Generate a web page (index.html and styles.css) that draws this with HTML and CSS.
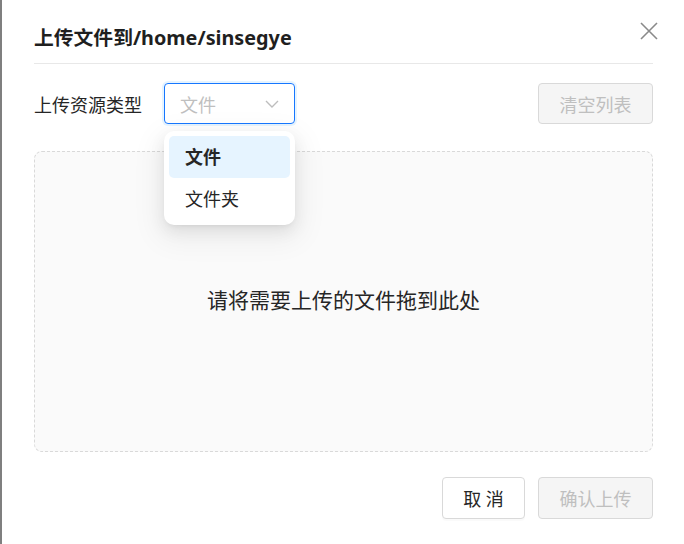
FILE: index.html
```html
<!DOCTYPE html>
<html lang="zh-CN">
<head>
<meta charset="utf-8">
<link rel="stylesheet" href="styles.css">
</head>
<body>
<div class="backdrop"></div>
<div class="dialog">
  <header class="dialog-header">
    <h1 class="dialog-title">上传文件到/home/sinsegye</h1>
    <button class="close-btn" aria-label="关闭">
      <svg width="18" height="18" viewBox="0 0 18 18"><path d="M1 1 L17 17 M17 1 L1 17" stroke="#8a8a8a" stroke-width="1.6" fill="none"/></svg>
    </button>
  </header>
  <div class="toolbar">
    <label class="field-label">上传资源类型</label>
    <div class="select-wrap">
      <div class="select">
        <span class="select-placeholder">文件</span>
        <svg class="chevron" width="14" height="8" viewBox="0 0 14 8"><path d="M1 1 L7 7 L13 1" stroke="#bdbdbd" stroke-width="1.4" fill="none"/></svg>
      </div>
      <ul class="dropdown">
        <li class="option option-active">文件</li>
        <li class="option">文件夹</li>
      </ul>
    </div>
    <button class="btn btn-disabled btn-clear">清空列表</button>
  </div>
  <div class="dropzone">
    <p class="drop-text">请将需要上传的文件拖到此处</p>
  </div>
  <footer class="dialog-footer">
    <button class="btn btn-default">取 消</button>
    <button class="btn btn-disabled">确认上传</button>
  </footer>
</div>
</body>
</html>
```
FILE: styles.css
```css
* { box-sizing: border-box; }
html, body { margin: 0; padding: 0; height: 100%; }
body {
  display: flex;
  font-family: "Noto Sans", "Noto Sans CJK SC", sans-serif;
  color: #262626;
  background: #fff;
  overflow: hidden;
}
.backdrop {
  width: 2px;
  flex: none;
  background: #7f7f7f;
}
.dialog {
  flex: 1;
  background: #fff;
  padding: 0 31px 0 32px;
  display: flex;
  flex-direction: column;
}
.dialog-header {
  height: 64px;
  display: flex;
  align-items: center;
  justify-content: space-between;
  border-bottom: 1px solid #e8e8e8;
  padding-top: 10px;
  position: relative;
}
.dialog-title {
  margin: 0;
  font-size: 19.8px;
  font-weight: 700;
  color: #1f1f1f;
}
.close-btn {
  position: absolute;
  right: -5px;
  top: 22px;
  border: 0;
  background: none;
  padding: 0;
  width: 18px;
  height: 18px;
  display: flex;
}
.toolbar {
  display: flex;
  align-items: center;
  margin-top: 19px;
  height: 41px;
}
.field-label {
  font-size: 18px;
  color: #262626;
  width: 130px;
}
.select-wrap {
  position: relative;
  width: 131px;
  height: 41px;
}
.select {
  height: 41px;
  border: 1px solid #1677ff;
  border-radius: 4px;
  box-shadow: 0 0 0 2px rgba(5, 145, 255, 0.1);
  display: flex;
  align-items: center;
  justify-content: space-between;
  padding: 0 15px 0 15px;
}
.select-placeholder {
  font-size: 18px;
  color: #bfbfbf;
}
.chevron { margin-top: 1px; }
.dropdown {
  position: absolute;
  top: 48px;
  left: 0;
  width: 131px;
  margin: 0;
  padding: 5px;
  list-style: none;
  background: #fff;
  border-radius: 10px;
  box-shadow: 0 6px 16px rgba(0,0,0,0.08), 0 3px 6px -4px rgba(0,0,0,0.12), 0 9px 28px 8px rgba(0,0,0,0.05);
  z-index: 2;
}
.option {
  height: 42px;
  display: flex;
  align-items: center;
  padding-left: 16px;
  padding-bottom: 2px;
  font-size: 18px;
  color: #262626;
  border-radius: 5px;
}
.option-active {
  background: #e6f4ff;
  font-weight: 700;
}
.btn {
  font-family: inherit;
  font-size: 18px;
  height: 42px;
  border-radius: 4px;
  border: 1px solid #d9d9d9;
  padding: 0 10px;
}
.btn-clear { margin-left: auto; width: 115px; height: 41px; }
.btn-disabled {
  background: #f5f5f5;
  color: #bfbfbf;
}
.btn-default {
  background: #fff;
  color: #262626;
  width: 83px;
  box-shadow: 0 2px 0 rgba(0,0,0,0.02);
}
.dropzone {
  margin-top: 27px;
  height: 301px;
  border: 1px dashed #d9d9d9;
  border-radius: 8px;
  background: #fafafa;
  display: flex;
  align-items: center;
  justify-content: center;
  padding-bottom: 5px;
}
.drop-text {
  margin: 0;
  font-size: 21px;
  color: #262626;
}
.dialog-footer {
  display: flex;
  justify-content: flex-end;
  gap: 13px;
  margin-top: 25px;
}
.dialog-footer .btn-disabled { width: 115px; }
```
